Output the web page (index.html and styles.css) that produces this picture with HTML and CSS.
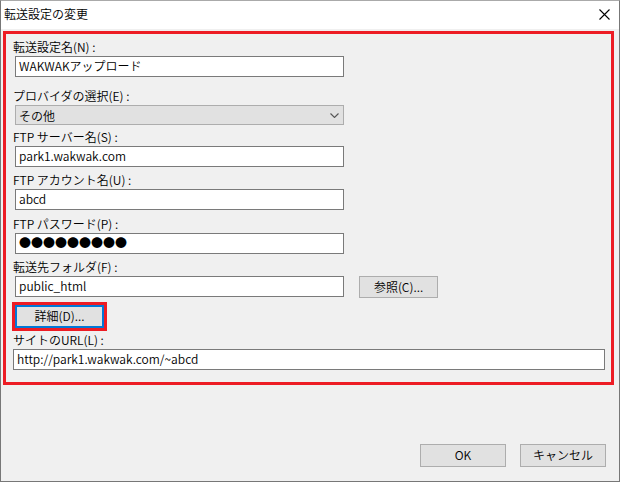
FILE: index.html
```html
<!DOCTYPE html>
<html lang="ja">
<head>
<meta charset="utf-8">
<title>転送設定の変更</title>
<link rel="stylesheet" href="styles.css">
</head>
<body>
<div class="window">
  <div class="titlebar">
    <span class="title">転送設定の変更</span>
    <svg class="close" width="11" height="11" viewBox="0 0 11 11"><path d="M0.5 0.5 L10.5 10.5 M10.5 0.5 L0.5 10.5" stroke="#000" stroke-width="1.1" fill="none"/></svg>
  </div>
  <div class="panel">
    <div class="lbl g1">転送設定名(N) :</div>
    <div class="input">WAKWAKアップロード</div>

    <div class="lbl g2">プロバイダの選択(E) :</div>
    <div class="select"><span>その他</span><svg class="chev" width="9" height="5" viewBox="0 0 9 5"><path d="M0.5 0.5 L4.5 4.5 L8.5 0.5" stroke="#555" stroke-width="1.1" fill="none"/></svg></div>

    <div class="lbl g3">FTP サーバー名(S) :</div>
    <div class="input">park1.wakwak.com</div>

    <div class="lbl g4">FTP アカウント名(U) :</div>
    <div class="input">abcd</div>

    <div class="lbl g5">FTP パスワード(P) :</div>
    <div class="input pw">●●●●●●●●●</div>

    <div class="lbl g4">転送先フォルダ(F) :</div>
    <div class="row">
      <div class="input">public_html</div>
      <div class="btn browse">参照(C)...</div>
    </div>

    <div class="detail-wrap">
      <div class="btn detail">詳細(D)...</div>
    </div>

    <div class="lbl g6">サイトのURL(L) :</div>
    <div class="input url">http://park1.wakwak.com/~abcd</div>
  </div>
  <div class="footer">
    <div class="btn foot">OK</div>
    <div class="btn foot">キャンセル</div>
  </div>
</div>
</body>
</html>
```
FILE: styles.css
```css
html, body {
  margin: 0;
  padding: 0;
}
body {
  font-family: "Noto Sans CJK JP", "Noto Sans", sans-serif;
  font-size: 12px;
  font-weight: 350;
  color: #000;
  background: #f0f0f0;
}
.window {
  width: 620px;
  height: 482px;
  box-sizing: border-box;
  border: 1px solid #777;
  border-top-color: #aaa;
  background: #f0f0f0;
}
.titlebar {
  height: 28px;
  background: #fff;
  display: flex;
  align-items: flex-start;
}
.title {
  padding-left: 3px;
  padding-top: 5px;
  line-height: 16px;
}
.close {
  margin-left: auto;
  margin-right: 9px;
  margin-top: 8px;
}
.panel {
  margin: 2px 5px 0 2px;
  width: 611px;
  height: 354px;
  box-sizing: border-box;
  border: 3px solid #ed1c24;
  padding-left: 7px;
}
.lbl {
  line-height: 15px;
  margin-bottom: 2px;
  white-space: pre;
}
.g1 { margin-top: 5px; }
.g2 { margin-top: 11px; }
.g3 { margin-top: 4px; }
.g4 { margin-top: 5px; }
.g5 { margin-top: 6px; }
.g6 { margin-top: 1px; }
.input {
  margin-left: 2px;
  width: 329px;
  height: 21px;
  box-sizing: border-box;
  border: 1px solid #7a7a7a;
  background: #fff;
  padding-left: 3px;
  line-height: 18px;
  white-space: pre;
}
.pw {
  font-size: 12px;
  line-height: 18px;
}
.url {
  margin-left: 0;
  width: 592px;
}
.select {
  margin-left: 2px;
  width: 329px;
  height: 20px;
  box-sizing: border-box;
  border: 1px solid #adadad;
  background: #e1e1e1;
  padding-left: 3px;
  padding-right: 4px;
  line-height: 17px;
  display: flex;
  align-items: center;
}
.select span {
  flex: 1;
}
.chev {
  margin-top: 1px;
}
.row {
  display: flex;
  align-items: flex-start;
}
.btn {
  box-sizing: border-box;
  border: 1px solid #adadad;
  background: #e1e1e1;
  text-align: center;
}
.browse {
  margin-left: 15px;
  width: 79px;
  height: 22px;
  line-height: 19px;
}
.detail-wrap {
  margin-top: 4px;
  margin-left: -1px;
  width: 95px;
  box-sizing: border-box;
  border: 3px solid #ed1c24;
}
.detail {
  height: 23px;
  border: 2px solid #0078d7;
  line-height: 18px;
}
.footer {
  display: flex;
  justify-content: flex-end;
  gap: 14px;
  margin-top: 59px;
  padding-right: 13px;
}
.foot {
  width: 86px;
  height: 23px;
  line-height: 20px;
}
```
